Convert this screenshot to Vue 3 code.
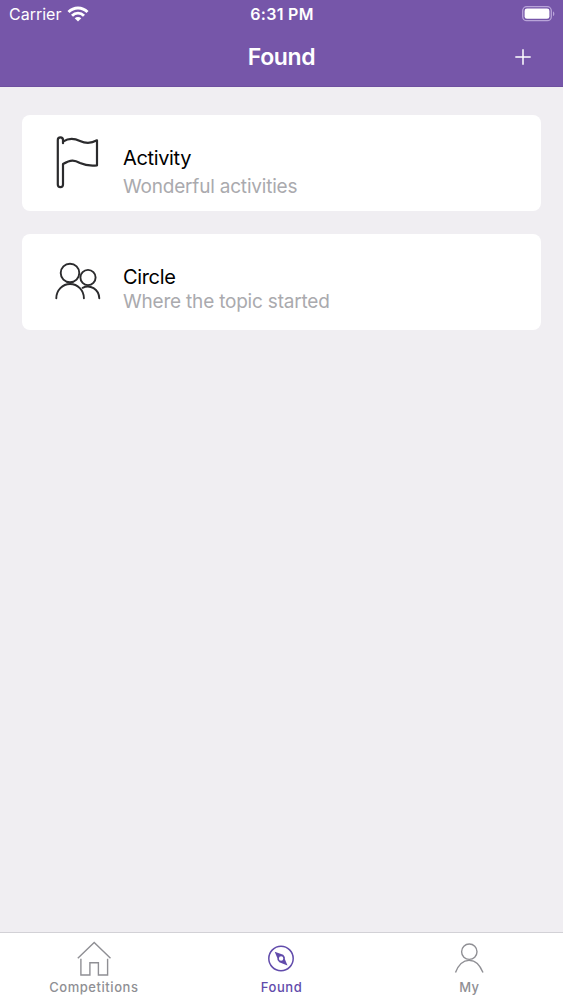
<script setup>
const entries = [
  { id: 'activity', title: 'Activity', note: 'Wonderful activities' },
  { id: 'circle', title: 'Circle', note: 'Where the topic started' },
]
</script>

<template>
  <div class="screen">
    <header class="top">
      <div class="status">
        <div class="carrier">
          <span class="carrier-name">Carrier</span>
          <svg class="wifi" width="22" height="16" viewBox="0 0 22 16">
            <g fill="none" stroke="#fff" stroke-width="2.9">
              <path d="M1.5 6.1C6.8.6 15.2.6 20.5 6.1" />
              <path d="M5 9.700c3.400-3.400 8.600-3.400 12 0" />
            </g>
            <path d="M7.700 12.300c1.900-1.800 4.700-1.800 6.600 0L11 15.600z" fill="#fff" />
          </svg>
        </div>
        <span class="clock">6:31 PM</span>
        <svg class="battery" width="33" height="16" viewBox="0 0 33 16">
          <rect x=".7" y=".7" width="28.6" height="14" rx="4" fill="none" stroke="#b9a4d9" stroke-width="1.3" />
          <rect x="2.6" y="2.6" width="24.8" height="10.2" rx="2.4" fill="#fff" />
          <path d="M31 5.400c1.800.700 1.800 4 0 4.700z" fill="#b9a4d9" />
        </svg>
      </div>
      <div class="nav">
        <h1>Found</h1>
        <svg class="plus" width="16" height="16" viewBox="0 0 16 16">
          <path d="M8 .3v15.400M.3 8h15.400" stroke="#fff" stroke-width="1.5" />
        </svg>
      </div>
    </header>

    <main>
      <section v-for="e in entries" :key="e.id" class="card" :class="e.id">
        <svg v-if="e.id === 'activity'" class="icon" width="60" height="60" viewBox="0 0 60 60">
          <g fill="none" stroke="#2b2b2d" stroke-width="2.2" stroke-linejoin="round" stroke-linecap="round">
            <path d="M15 8a2.600 2.600 0 0 0-5.200 0v44.600a2.600 2.600 0 0 0 5.200 0V32C23 27.300 26.500 27.800 32 31c5.500 2.500 10.500 3 17 2.300V8.300c-5.500 3-11.500 3.200-17 .6C26 6 21 5.600 15.400 9.400" />
            <path d="M15 8v3.200" />
          </g>
        </svg>
        <svg v-else class="icon" width="60" height="60" viewBox="0 0 60 60">
          <g fill="none" stroke="#2b2b2d" stroke-width="1.9" stroke-linecap="round">
            <circle cx="22" cy="22" r="9.300" />
            <circle cx="40" cy="26.500" r="7.600" />
            <path d="M8.300 47.300a13.800 14.300 0 0 1 27.600 0M34.600 36.800c7.500-3.700 16.200 1.200 16.700 10.500" />
          </g>
        </svg>
        <div class="words">
          <h2>{{ e.title }}</h2>
          <p>{{ e.note }}</p>
        </div>
      </section>
    </main>

    <nav class="tabs">
      <a class="tab home">
        <svg width="36" height="36" viewBox="0 0 36 36" fill="none" stroke="#8f8f94" stroke-width="1.400">
          <path d="M1.800 18.300 18.200 2.500l16.300 15.800M4.900 18.800V35h9V22.700h8.500V35h9.200V18.800" />
        </svg>
        <span>Competitions</span>
      </a>
      <a class="tab found">
        <svg width="36" height="36" viewBox="0 0 36 36">
          <circle cx="18" cy="18.500" r="12.200" fill="none" stroke="#614bab" stroke-width="1.500" />
          <path fill-rule="evenodd" fill="#614bab" d="M11.700 11.800 20.200 14.700Q22.300 16.600 21.900 19.200L24.500 25.600 16.300 22.300Q13.800 20.600 14.300 18zM18.100 16.300a2.200 2.200 0 1 0 0 4.400 2.200 2.200 0 0 0 0-4.400z" />
        </svg>
        <span>Found</span>
      </a>
      <a class="tab my">
        <svg width="36" height="36" viewBox="0 0 36 36" fill="none" stroke="#8f8f94" stroke-width="1.400">
          <circle cx="18.300" cy="11.700" r="7.700" />
          <path d="M4.500 32.500C7.500 24.800 11 20.400 18 20.400S28.500 24.800 32 32.500" />
        </svg>
        <span>My</span>
      </a>
    </nav>
  </div>
</template>

<style>
body {
  margin: 0;
}
</style>

<style scoped>
.screen {
  display: flex;
  flex-direction: column;
  height: 1000px;
  background: #f0eef2;
  font-family: Inter, "Liberation Sans", sans-serif;
}
.top {
  box-sizing: border-box;
  height: 87px;
  background: #7656a9;
  border-bottom: 1px solid #6e509f;
  color: #fff;
}
.status,
.nav {
  display: grid;
  grid-template-columns: 1fr auto 1fr;
  align-items: center;
}
.status {
  height: 28px;
  padding: 0 8px 0 9px;
}
.carrier {
  display: flex;
  align-items: center;
  gap: 6px;
}
.carrier-name {
  font-size: 16px;
  line-height: 20px;
}
.wifi {
  margin-top: -1px;
}
.clock {
  font-size: 16px;
  font-weight: 600;
  line-height: 20px;
  letter-spacing: 0.3px;
}
.battery {
  justify-self: end;
}
.nav {
  height: 58px;
  padding-right: 32px;
}
h1 {
  grid-column: 2;
  margin: 0 0 0 32px;
  font-size: 23px;
  font-weight: 600;
  line-height: 30px;
  letter-spacing: -0.4px;
}
.plus {
  justify-self: end;
}
main {
  flex: 1;
  display: flex;
  flex-direction: column;
  gap: 23px;
  padding: 28px 22px 0;
}
.card {
  display: flex;
  box-sizing: border-box;
  height: 96px;
  padding-left: 26px;
  border-radius: 8px;
  background: #fff;
}
.icon {
  margin-top: 17px;
}
.words {
  padding: 31px 0 0 15px;
}
h2,
p {
  margin: 0;
  font-weight: 400;
  line-height: 24px;
}
h2 {
  color: #000;
  font-size: 20px;
  letter-spacing: -0.35px;
}
p {
  margin-top: 5px;
  color: #aaaaae;
  font-size: 19px;
  letter-spacing: -0.2px;
}
.circle p {
  margin-top: 1px;
}
.tabs {
  display: grid;
  grid-template-columns: repeat(3, 1fr);
  box-sizing: border-box;
  height: 68px;
  padding-top: 7px;
  border-top: 1px solid #d2d1d6;
  background: #fff;
}
.tab {
  display: flex;
  flex-direction: column;
  align-items: center;
  color: #8f8f94;
  font-size: 13px;
  font-weight: 500;
  line-height: 16px;
  letter-spacing: 0.55px;
}
.tab span {
  margin-top: 3px;
}
.tab.found {
  color: #614bab;
}
.tab.my {
  letter-spacing: 0.1px;
}
</style>
